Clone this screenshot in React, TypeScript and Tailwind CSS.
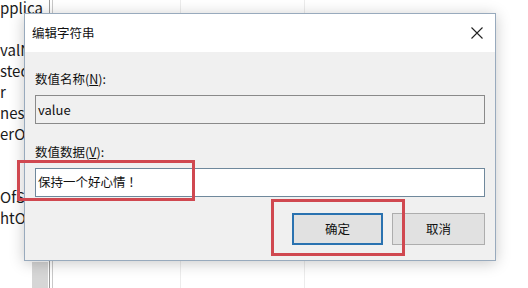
const listRows = [
  { text: "pplica", top: "-mt-[3px]" },
  { text: "", top: "" },
  { text: "valN", top: "" },
  { text: "sted", top: "" },
  { text: "r", top: "" },
  { text: "nes", top: "" },
  { text: "erOr", top: "" },
  { text: "", top: "" },
  { text: "", top: "" },
  { text: "OfSc", top: "" },
  { text: "htO", top: "" },
];

function Background() {
  return (
    <div className="flex h-full w-full bg-white">
      <div className="flex w-[49px] flex-col overflow-hidden text-[15px] leading-[21px] text-[#1a1a1a]">
        {listRows.map((row, i) => (
          <div key={i} className={`h-[21px] whitespace-nowrap ${row.top}`}>
            {row.text}
          </div>
        ))}
        <div className="mt-auto ml-[32px] h-[26px] w-[16px] bg-[#d6d6d6]" />
      </div>
      <div className="w-px bg-[#9a9a9a]" />
      <div className="w-[2px] bg-white" />
      <div className="w-px bg-[#c8c8c8]" />
      <div className="w-[127px]" />
      <div className="w-px bg-[#ececec]" />
      <div className="w-[123px]" />
      <div className="w-px bg-[#ececec]" />
      <div className="flex-1" />
    </div>
  );
}

function Dialog() {
  return (
    <div className="absolute top-[13px] left-[24px] flex h-[248px] w-[472px] flex-col border border-[#98aabd] bg-[#f0f0f0] shadow-[0_2px_14px_rgba(0,0,0,0.22)]">
      <div className="flex h-[38px] items-center justify-between bg-white pl-[7px] pr-[10px]">
        <span className="text-[12.5px] text-[#111]">编辑字符串</span>
        <svg width="12" height="12" viewBox="0 0 12 12" className="mr-[2px]">
          <path d="M0.5 0.5 L11.5 11.5 M11.5 0.5 L0.5 11.5" stroke="#222" strokeWidth="1.1" />
        </svg>
      </div>
      <div className="flex flex-col px-[10px] pt-[18px]">
        <div className="h-[18px] text-[12.5px] leading-[18px] text-[#111]">
          数值名称(<u>N</u>):
        </div>
        <div className="mt-[7px] flex h-[29px] items-center border border-[#8a8a8a] bg-[#f0f0f0] px-[2px] text-[13px] text-[#111]">
          value
        </div>
        <div className="mt-[19px] h-[18px] text-[12.5px] leading-[18px] text-[#111]">
          数值数据(<u>V</u>):
        </div>
        <div className="mt-[7px] flex h-[29px] items-center border border-[#6f889c] bg-white px-[2px] text-[12.5px] text-[#111]">
          保持一个好心情 ！
        </div>
        <div className="mt-[16px] flex justify-end gap-[9px]">
          <button className="h-[32px] w-[91px] border-2 border-[#2a72b0] bg-[#e1e1e1] text-[12.5px] text-[#111]">
            确定
          </button>
          <button className="h-[32px] w-[93px] border border-[#adadad] bg-[#e1e1e1] text-[12.5px] text-[#111]">
            取消
          </button>
        </div>
      </div>
    </div>
  );
}

export default function App() {
  return (
    <div
      className="relative h-[288px] w-[528px] overflow-hidden"
      style={{ fontFamily: '"Noto Sans CJK SC", "Noto Sans", sans-serif' }}
    >
      <Background />
      <Dialog />
      <div className="absolute top-[160px] left-[17px] h-[41px] w-[178px] border-[3px] border-[#d04850]" />
      <div className="absolute top-[199px] left-[271px] h-[57px] w-[134px] border-[3px] border-[#d04850]" />
    </div>
  );
}
